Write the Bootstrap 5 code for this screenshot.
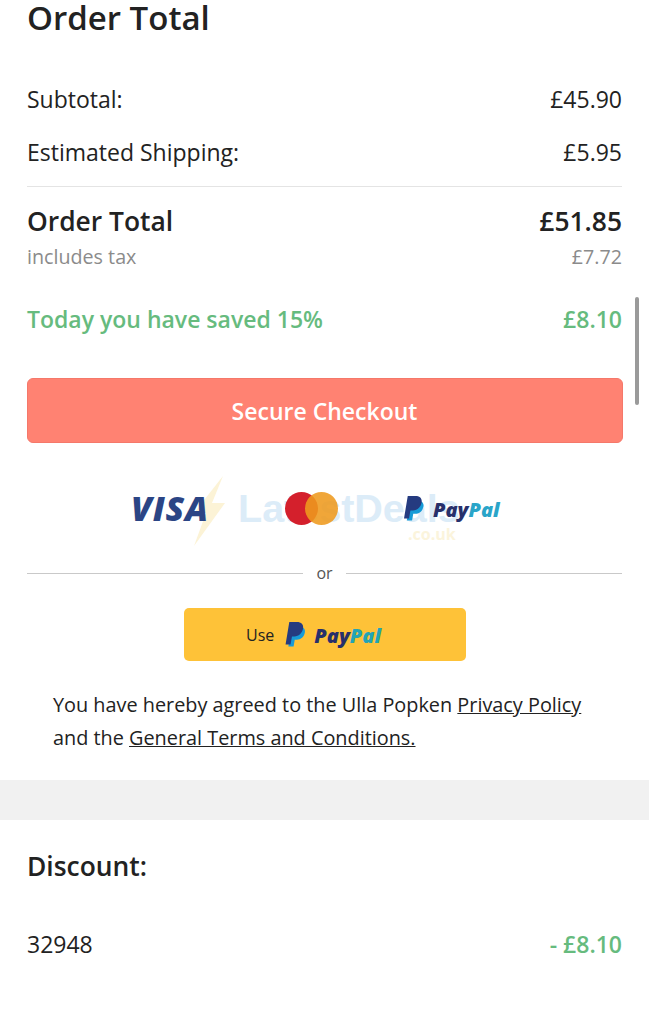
<!DOCTYPE html>
<html lang="en">
<head>
<meta charset="utf-8">
<title>Order Total</title>
<link href="https://cdn.jsdelivr.net/npm/bootstrap@5.3.0/dist/css/bootstrap.min.css" rel="stylesheet">
<style>
html,body{height:1024px;overflow:hidden}
body{font-family:"Open Sans","Noto Sans",sans-serif;color:#222;background:#fff;position:relative}
.sum-wrap{padding:0 27px}
.sum-title{font-size:33px;font-weight:600;line-height:36px;margin:0;color:#222}
.sum-row{font-size:23px;line-height:30px}
.first-row{margin-top:48px}
.ship-row{margin-top:23px}
.sum-rule{border-top:1px solid #e4e4e4;margin:19px 0 0}
.total-row{font-size:26.4px;font-weight:600;line-height:34px;margin-top:17px}
.tax-row{font-size:19.7px;line-height:26px;color:#8b8b8b;margin-top:6px}
.save-row{font-size:23px;font-weight:600;line-height:30px;color:#66bb7e;margin-top:34px}
.checkout-btn{display:block;width:calc(100% + 1px);height:65px;margin:44px 0 0 -.5px;background:#ff8272;border:1px solid #f5786a;border-radius:6px;color:#fff;font-size:23px;font-weight:600;line-height:65px;padding:0;text-align:center}
.pay-logos{height:72px;margin:29px 0 19px;padding-left:104px;position:relative}
.logo-visa{position:relative;width:77px;font-family:"Open Sans",sans-serif;font-size:34px;font-style:italic;font-weight:800;color:#2b4585;letter-spacing:.8px;line-height:36px}
.mc-mark{position:relative;margin-left:77px}
.pp-logo{position:relative;margin-left:65px}
.pp-word{font-family:"Open Sans",sans-serif;font-style:italic;font-weight:800;color:#27306b;line-height:24px}
.pp-word span{color:#2aa5c9}
.pp-logo .pp-word{font-size:20px;margin-top:4px}
.wm-word{position:absolute;left:211px;top:14px;font-family:"Liberation Sans",sans-serif;font-size:39.5px;font-weight:700;color:#dcecf8;line-height:44px;white-space:nowrap}
.wm-tld{position:absolute;left:381px;top:52px;font-size:16px;font-weight:700;color:#fbf4dc;line-height:20px}
.wm-bolt{position:absolute;left:165px;top:4px}
.or-line{font-size:16px;line-height:20px;color:#555}
.or-line i{flex:1;border-top:1px solid #c9c9c9;display:block}
.or-line b{font-weight:400;padding:0 13.5px}
.pp-btn{width:282px;height:53px;margin:25px auto 0;padding-right:22px;background:#fec238;border-radius:5px;font-size:16px;color:#222}
.pp-btn svg{margin-left:3px}
.pp-btn .pp-word{font-size:20px;margin-top:3px}
.pp-btn .pp-word span{color:#24a4b5}
.legal{font-size:19.85px;line-height:33px;margin:27px 0 0;padding:0 26px;color:#222;height:92px}
.legal a{color:#222}
.band{height:40px;background:#f1f1f1}
.disc-title{font-size:26.4px;font-weight:600;line-height:34px;margin:29px 0 0}
.disc-row{font-size:23px;line-height:30px;margin-top:46px}
.disc-amt{font-weight:600;color:#66bb7e}
.scroll-thumb{position:absolute;left:635px;top:297px;width:4px;height:108px;background:#9a9a9a;border-radius:2px}
</style>
</head>
<body>
<section class="sum-wrap">
  <h1 class="sum-title">Order Total</h1>
  <div class="sum-row first-row d-flex justify-content-between"><span>Subtotal:</span><span>£45.90</span></div>
  <div class="sum-row ship-row d-flex justify-content-between"><span>Estimated Shipping:</span><span>£5.95</span></div>
  <div class="sum-rule"></div>
  <div class="total-row d-flex justify-content-between"><span>Order Total</span><span>£51.85</span></div>
  <div class="tax-row d-flex justify-content-between"><span>includes tax</span><span>£7.72</span></div>
  <div class="save-row d-flex justify-content-between"><span>Today you have saved 15%</span><span>£8.10</span></div>
  <button class="checkout-btn" type="button">Secure Checkout</button>
  <div class="pay-logos d-flex align-items-center">
    <svg class="wm-bolt" width="34" height="70" viewBox="0 0 34 70"><path d="M31 0 2 37h12L2 70 33 27H20Z" fill="#fcf3d6"/></svg>
    <span class="wm-word">LatestDeals</span>
    <span class="wm-tld">.co.uk</span>
    <span class="logo-visa">VISA</span>
    <svg class="mc-mark" width="53" height="33" viewBox="0 0 53 33"><circle cx="16.5" cy="16.5" r="16.5" fill="#d4202c"/><circle cx="36.5" cy="16.5" r="16.5" fill="#ee9a1e" opacity=".88"/></svg>
    <div class="pp-logo d-flex align-items-center gap-2">
      <svg width="22" height="25" viewBox="0 0 22 26"><path d="M7 5h8c4 0 6.500 2.200 5.800 6-.8 4.500-4.200 7.500-8.400 7.500h-2.200l-1.200 7H3.500Z" fill="#179bd7"/><path d="M4.500 0h8c4.500 0 7.200 2.400 6.400 7-.9 4.600-4.500 8-9 8H7.300L5.800 23.500H.6Z" fill="#253b80"/></svg>
      <span class="pp-word">Pay<span>Pal</span></span>
    </div>
  </div>
  <div class="or-line d-flex align-items-center"><i></i><b>or</b><i></i></div>
  <div class="pp-btn d-flex align-items-center justify-content-center gap-2">
    <span>Use</span>
    <svg width="21" height="25" viewBox="0 0 22 26"><path d="M7 5h8c4 0 6.500 2.200 5.800 6-.8 4.500-4.200 7.500-8.400 7.500h-2.200l-1.200 7H3.500Z" fill="#179bd7"/><path d="M4.500 0h8c4.500 0 7.200 2.400 6.400 7-.9 4.600-4.500 8-9 8H7.300L5.800 23.500H.6Z" fill="#253b80"/></svg>
    <span class="pp-word">Pay<span>Pal</span></span>
  </div>
  <p class="legal">You have hereby agreed to the Ulla Popken <a href="#">Privacy Policy</a> and the <a href="#">General Terms and Conditions.</a></p>
</section>
<div class="band"></div>
<section class="sum-wrap">
  <h2 class="disc-title">Discount:</h2>
  <div class="disc-row d-flex justify-content-between"><span>32948</span><span class="disc-amt">- £8.10</span></div>
</section>
<div class="scroll-thumb"></div>
</body>
</html>
